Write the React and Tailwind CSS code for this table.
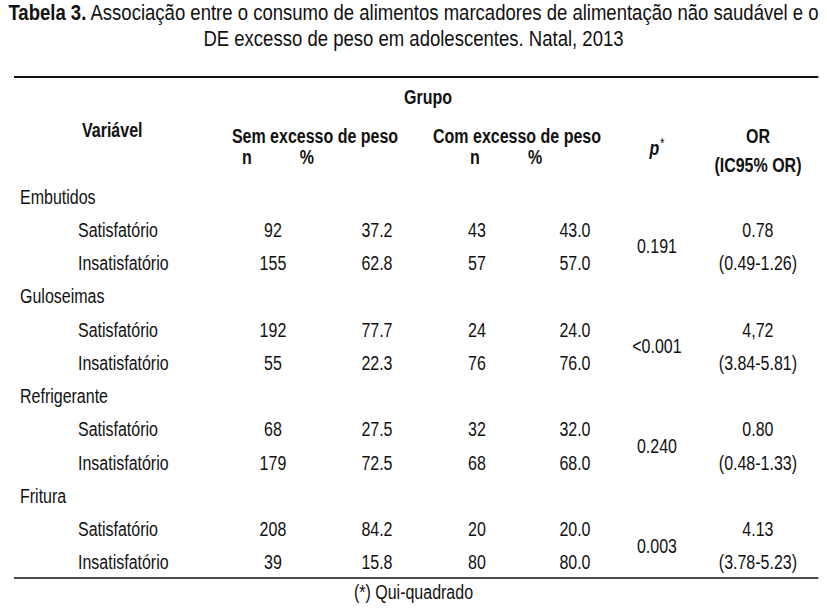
const groups = [
  {
    name: 'Embutidos',
    p: '0.191',
    rows: [
      ['Satisfatório', '92', '37.2', '43', '43.0', '0.78'],
      ['Insatisfatório', '155', '62.8', '57', '57.0', '(0.49-1.26)'],
    ],
  },
  {
    name: 'Guloseimas',
    p: '<0.001',
    rows: [
      ['Satisfatório', '192', '77.7', '24', '24.0', '4,72'],
      ['Insatisfatório', '55', '22.3', '76', '76.0', '(3.84-5.81)'],
    ],
  },
  {
    name: 'Refrigerante',
    p: '0.240',
    rows: [
      ['Satisfatório', '68', '27.5', '32', '32.0', '0.80'],
      ['Insatisfatório', '179', '72.5', '68', '68.0', '(0.48-1.33)'],
    ],
  },
  {
    name: 'Fritura',
    p: '0.003',
    rows: [
      ['Satisfatório', '208', '84.2', '20', '20.0', '4.13'],
      ['Insatisfatório', '39', '15.8', '80', '80.0', '(3.78-5.23)'],
    ],
  },
];

// widths below are in the un-narrowed space (page is squeezed by scale-x 0.82 to mimic Arial Narrow)
function Group({ group }) {
  return (
    <div>
      <div className="flex h-[33.27px] items-center pl-[24.4px]">{group.name}</div>
      <div className="grid grid-cols-[257.3px_151.2px_102.4px_141.5px_97.6px_102.4px_143.9px] grid-rows-[33.27px_33.27px]">
        {group.rows.map((row, r) => (
          <div key={r} className="contents">
            <div className={`col-start-1 flex items-center pl-[95.1px] ${r === 0 ? 'row-start-1' : 'row-start-2'}`}>{row[0]}</div>
            <div className={`col-start-2 flex items-center justify-center ${r === 0 ? 'row-start-1' : 'row-start-2'}`}>{row[1]}</div>
            <div className={`col-start-3 flex items-center justify-center ${r === 0 ? 'row-start-1' : 'row-start-2'}`}>{row[2]}</div>
            <div className={`col-start-4 flex items-center justify-center ${r === 0 ? 'row-start-1' : 'row-start-2'}`}>{row[3]}</div>
            <div className={`col-start-5 flex items-center justify-center ${r === 0 ? 'row-start-1' : 'row-start-2'}`}>{row[4]}</div>
            <div className={`col-start-7 flex items-center justify-center ${r === 0 ? 'row-start-1' : 'row-start-2'}`}>{row[5]}</div>
          </div>
        ))}
        <div className="col-start-6 row-span-2 row-start-1 flex items-center justify-center">{group.p}</div>
      </div>
    </div>
  );
}

export default function App() {
  return (
    <div className="h-[609px] w-[827px] overflow-hidden bg-white">
      <div className="w-[1008.5px] origin-top-left scale-x-[0.82] font-['Liberation_Sans','Arial',sans-serif] text-[19.5px] text-[#111]">
        {/* title */}
        <div className="text-center text-[22.6px] leading-[26px]">
          <div className="whitespace-nowrap">
            <span className="font-bold">Tabela 3.</span> Associação entre o consumo de alimentos marcadores de alimentação não saudável e o
          </div>
          <div>DE excesso de peso em adolescentes. Natal, 2013</div>
        </div>

        <div className="mx-[17.07px] mt-[24px] h-[2px] w-[980.5px] bg-[#111]" />

        {/* header */}
        <div className="pl-[35.5px] pt-[6px] text-center font-bold leading-[26px]">Grupo</div>
        <div className="grid h-[70.5px] grid-cols-[257.3px_253.7px_239px_102.4px_143.9px] font-bold">
          <div className="pl-[100px] pt-[7px] leading-[26px]">Variável</div>
          <div className="pt-[16px] leading-[21px]">
            <div className="text-center">Sem excesso de peso</div>
            <div className="flex">
              <span className="ml-[31.7px] w-[24.4px] text-center">n</span>
              <span className="ml-[48.8px] w-[24.4px] text-center">%</span>
            </div>
          </div>
          <div className="pt-[16px] leading-[21px]">
            <div className="text-center">Com excesso de peso</div>
            <div className="flex">
              <span className="ml-[56.1px] w-[24.4px] text-center">n</span>
              <span className="ml-[48.8px] w-[24.4px] text-center">%</span>
            </div>
          </div>
          <div className="pt-[25px] text-center leading-[26px]">
            <span className="italic">p</span>
            <sup className="ml-[1px] text-[14px] font-normal">*</sup>
          </div>
          <div className="pt-[11.5px] text-center leading-[29px]">
            <div>OR</div>
            <div>(IC95% OR)</div>
          </div>
        </div>

        {/* body */}
        <div>
          {groups.map((g) => (
            <Group key={g.name} group={g} />
          ))}
        </div>

        <div className="mx-[17.07px] -mt-[3px] h-[2px] w-[980.5px] bg-[#4d4d4d]" />
        <div className="text-center leading-[26px]">(*) Qui-quadrado</div>
      </div>
    </div>
  );
}
